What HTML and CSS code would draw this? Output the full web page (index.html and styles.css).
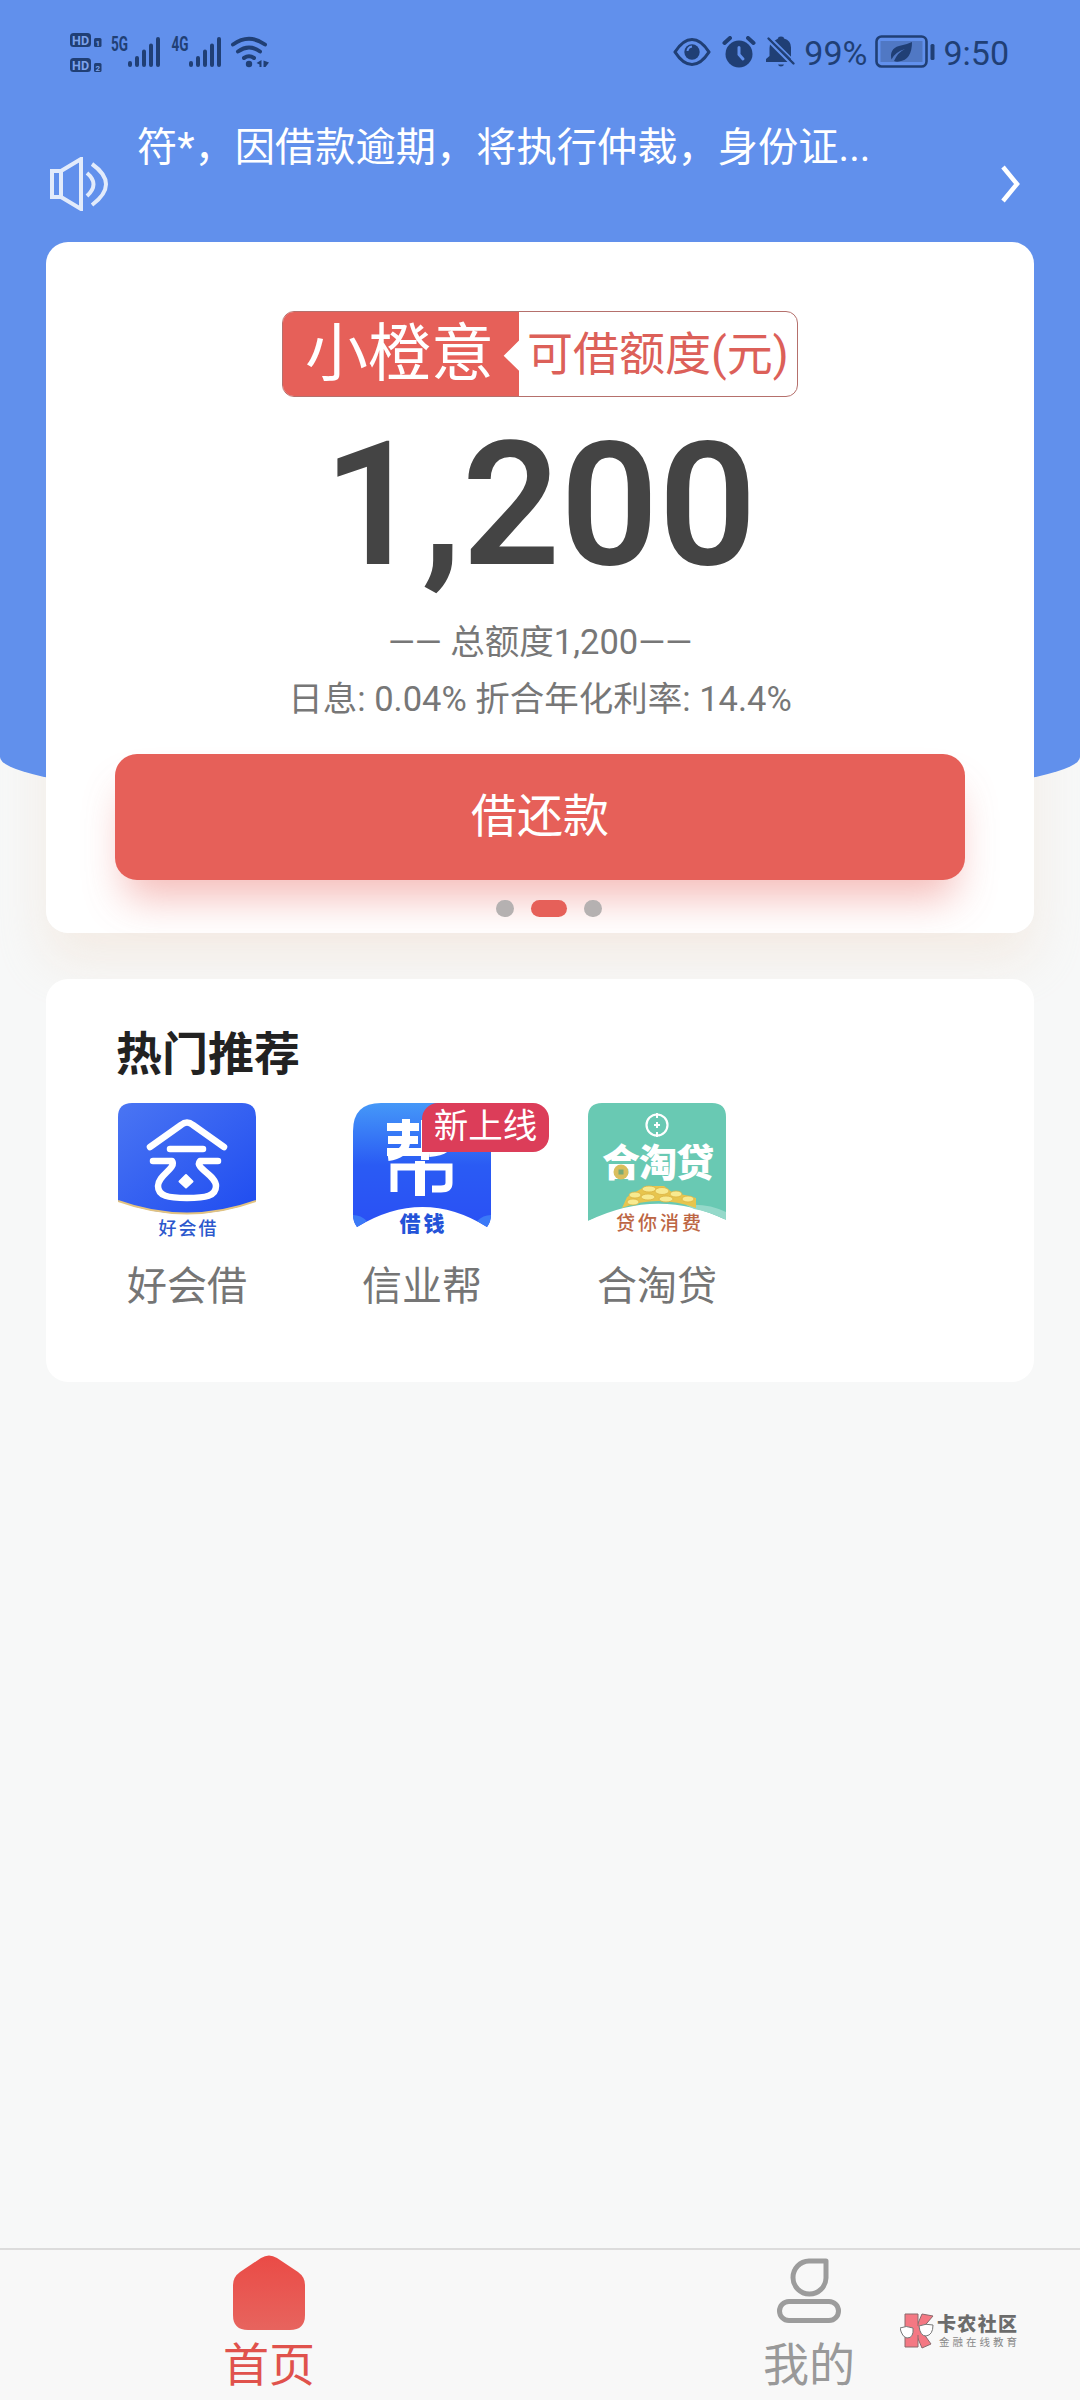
FILE: index.html
```html
<!DOCTYPE html>
<html lang="zh-CN">
<head>
<meta charset="utf-8">
<meta name="viewport" content="width=device-width">
<title>首页</title>
<link rel="stylesheet" href="styles.css">
</head>
<body>
<div class="screen">
  <header class="status">
    <svg class="status-left" width="230" height="50" viewBox="0 -3 230 50">
      <rect x="0" y="3" width="21" height="14" rx="3.5"/>
      <rect x="0" y="28" width="21" height="14" rx="3.5"/>
      <rect x="24" y="8" width="7.500" height="9" rx="1.500"/>
      <rect x="24" y="33" width="7.500" height="9" rx="1.500"/>
      <g class="knock"><text x="2" y="14.600" font-size="12.500" textLength="17">HD</text><text x="2" y="39.600" font-size="12.500" textLength="17">HD</text><text x="25.600" y="15.800" font-size="8">1</text><text x="25.600" y="40.800" font-size="8">2</text></g>
      <g class="net"><text x="41" y="20.500" font-size="20" textLength="17" lengthAdjust="spacingAndGlyphs">5G</text><text x="101.500" y="20.500" font-size="20" textLength="17" lengthAdjust="spacingAndGlyphs">4G</text></g>
      <g class="bars">
        <path d="M60 33v2M67 28v7M74 21.500v13.500M81 15.500v19.500M88 9v26"/>
        <path d="M121 33v2M128 28v7M135 21.500v13.500M142 15.500v19.500M149 9v26"/>
      </g>
      <g class="wifi"><path d="M163 14.500Q179 3 195 14.500M168 21.500Q179 13.500 190 21.500M174 28Q179 24.500 184 28"/></g>
      <circle cx="179" cy="34" r="3.200"/>
      <path d="M191.500 30v7h-2v-2.500l-3-1.500zM193.500 30.500l5.500 2-3.500 4.500h-2z"/>
    </svg>
    <div class="status-right">
      <svg width="38" height="30" viewBox="0 0 38 30"><path d="M2 15Q10 2.500 19 2.500T36 15Q28 27.500 19 27.500T2 15Z" fill="none" stroke="#203f75" stroke-width="3.200" stroke-linejoin="round"/><circle cx="19" cy="15" r="7.700"/><path d="M14.500 14q.5-4 4.500-4.500" fill="none" stroke="#6190ec" stroke-width="2"/></svg>
      <svg class="alarm" width="34" height="32" viewBox="0 0 34 32"><circle cx="17" cy="18" r="13.500"/><path d="M2.500 7l5.500-5M31.500 7l-5.500-5" stroke="#203f75" stroke-width="4" stroke-linecap="round"/><path d="M17 11.500v7l4 4.500" fill="none" stroke="#6190ec" stroke-width="3" stroke-linecap="round"/></svg>
      <svg class="bell" width="30" height="32" viewBox="0 0 30 32"><path d="M8 5q3-2 4-2.500 0-2 3-2t3 2q7 2 7 9v13zM4 8.500L21.500 26H0v-3l3.500-3v-8zM12 28.500h6q-.5 2-3 2t-3-2z"/><path d="M2.500 2.500l25 25" stroke="#203f75" stroke-width="2.400" stroke-linecap="round"/><path d="M6 2.800l22 22" stroke="#6190ec" stroke-width="1.600"/></svg>
      <span class="pct">99%</span>
      <svg class="battery" width="60" height="34" viewBox="0 0 60 34"><rect x="1.500" y="1.500" width="50" height="30" rx="5" fill="none" stroke="#203f75" stroke-width="2.600"/><rect x="5.500" y="6" width="42" height="21" fill="#5078c4"/><rect x="55.500" y="9" width="4" height="16" rx="1.500"/><path d="M37 7q0 18-13 19.500-3 .5-5-.5 4-9 11-12-10 3-13.500 10.500Q14 14 24 11q8-1.500 13-4z"/></svg>
      <span class="time">9:50</span>
    </div>
  </header>

  <div class="notice">
    <svg class="speaker" width="60" height="54" viewBox="0 0 60 54"><path d="M2 14h9v26H2zM11 14L31 2v50L11 40"/><path d="M37 16q13 11 0 23M42 7q28 20 0 41" /></svg>
    <p>符*，因借款逾期，将执行仲裁，身份证...</p>
    <svg class="more" width="22" height="40" viewBox="0 0 22 40"><path d="M2 3l14 17L2 37"/></svg>
  </div>

  <main>
    <section class="card loan">
      <div class="tag"><span class="brand">小橙意</span><span class="kind">可借额度(元)</span></div>
      <div class="amount">1,200</div>
      <p class="line total">—— 总额度1,200——</p>
      <p class="line">日息: 0.04% 折合年化利率: 14.4%</p>
      <button class="cta" type="button">借还款</button>
      <div class="dots"><i></i><i class="on"></i><i></i></div>
    </section>

    <section class="card hot">
      <h2>热门推荐</h2>
      <div class="apps">
        <div class="app">
          <svg width="138" height="138" viewBox="0 0 138 138">
            <defs><linearGradient id="g1" x1="0" y1="0" x2="1" y2="1"><stop offset="0" stop-color="#4a75f3"/><stop offset="1" stop-color="#1f4cf0"/></linearGradient></defs>
            <path d="M14 0H124Q138 0 138 14V98Q69 124 0 98V14Q0 0 14 0Z" fill="url(#g1)"/>
            <path d="M0 98Q69 123 138 98" fill="none" stroke="#e2c381" stroke-width="2"/>
            <g fill="none" stroke="#fff" stroke-width="6.500" stroke-linecap="round" stroke-linejoin="round"><path d="M32 44L63 22Q69 17 75 22L106 44M52 46H85"/><path d="M35 58H54C59 65 40 72 40 83C40 93 50 95 69 95S98 93 98 83C98 72 76 65 82 58H100"/></g>
            <path d="M68 72l6.500 6.500-6.500 6-6.500-6z" fill="#fff" stroke="#fff" stroke-width="2" stroke-linejoin="round"/>
            <text x="40.500" y="132" font-size="18" textLength="58" fill="#2c58cd" font-weight="500">好会借</text>
          </svg>
          <span>好会借</span>
        </div>
        <div class="app">
          <svg width="138" height="138" viewBox="0 0 138 138">
            <defs><linearGradient id="g2" x1="0" y1="0" x2="0" y2="1"><stop offset="0" stop-color="#4598f8"/><stop offset=".5" stop-color="#2a5bf4"/><stop offset="1" stop-color="#2a50f4"/></linearGradient></defs>
            <path d="M28 0H110Q138 0 138 28V112Q138 118 134 124Q70 84 4 124Q0 118 0 112V28Q0 0 28 0Z" fill="url(#g2)"/>
            <path d="M0 112q8 0 14 6l-10 6q-4-5-4-12zM138 112q-8 0-14 6l10 6q4-5 4-12z" fill="#3b79f7"/>
            <g fill="none" stroke="#fff" stroke-width="8"><path d="M34 24H66M35 37H65M34 49H68M53 16V40Q51 52 35 54M72 17V57M72 22H94Q86 29 94 36Q99 48 76 50"/><path stroke-width="7" d="M41 89V64H96V80Q96 86 88 86H79"/><path stroke-width="10" d="M67 58V93"/></g>
            <text x="46.500" y="128" font-size="21" textLength="45" fill="#2453d8" font-weight="900">借钱</text>
          </svg>
          <b class="badge">新上线</b>
          <span>信业帮</span>
        </div>
        <div class="app">
          <svg width="138" height="138" viewBox="0 0 138 138">
            <path d="M14 0H124Q138 0 138 14V117Q70 84 0 118V14Q0 0 14 0Z" fill="#69c9b3"/>
            <path d="M98 102q22-2 40 7v8q-18-9-32-11z" fill="#95d9ca"/>
            <circle cx="69" cy="22" r="10.500" fill="none" stroke="#fff" stroke-width="2.200"/><path d="M69 10v5M69 29v5M66 22h6M69 19v6" stroke="#fff" stroke-width="2"/>
            <text x="14" y="73" font-size="38" textLength="112" fill="#fff" font-weight="900">合淘贷</text>
            <circle cx="33" cy="69" r="7.500" fill="#d9be5d"/><rect x="30.500" y="66.500" width="5" height="5" fill="#79aa77"/>
            <path d="M34 105L39 94 51 87 59 83H76L85 90 97 92 108 95V105Q70 91 34 105Z" fill="#e7c54e"/>
            <g fill="#f8ea90" stroke="#dcb444" stroke-width=".8"><ellipse cx="47" cy="92" rx="6" ry="3"/><ellipse cx="61" cy="86" rx="7" ry="3"/><ellipse cx="74" cy="88" rx="7" ry="3.500"/><ellipse cx="88" cy="91" rx="6" ry="3"/><ellipse cx="100" cy="96" rx="6" ry="3"/><ellipse cx="60" cy="94" rx="7" ry="3"/><ellipse cx="78" cy="96" rx="7" ry="3"/><ellipse cx="45" cy="99" rx="6" ry="3"/></g>
            <path d="M0 118Q69 90 138 117V138H0Z" fill="#fff"/>
            <text x="28" y="127" font-size="19" textLength="85" fill="#bd6644" font-weight="500">贷你消费</text>
          </svg>
          <span>合淘贷</span>
        </div>
      </div>
    </section>
  </main>

  <nav class="tabs">
    <div class="tab active">
      <svg width="72" height="76" viewBox="0 0 72 76"><defs><linearGradient id="g3" x1="0" y1="0" x2="0" y2="1"><stop offset="0" stop-color="#ea4b46"/><stop offset="1" stop-color="#e7645e"/></linearGradient></defs><path d="M28 3Q36-2 44 3L65 17Q72 22 72 30V60Q72 75 57 75H15Q0 75 0 60V30Q0 22 7 17Z" fill="url(#g3)"/></svg>
      <span>首页</span>
    </div>
    <div class="tab">
      <svg width="72" height="76" viewBox="0 0 72 76"><path d="M53 6V23A16.500 16.500 0 1 1 36 6Z" fill="none" stroke="#9c9c9c" stroke-width="5" stroke-linejoin="round"/><rect x="6.500" y="46.500" width="59" height="19" rx="9.500" fill="none" stroke="#9c9c9c" stroke-width="5"/></svg>
      <span>我的</span>
    </div>
    <svg class="mark" width="120" height="38" viewBox="0 0 120 38">
      <g fill="#f47883" stroke="#8a6a6d" stroke-width="1"><path d="M22 2L33 4 21 18 31 32 22 36 16 22V16Z"/><path d="M5 2H18V35H5Z"/></g>
      <path d="M17 14h3v9h-3z" fill="#f47883"/>
      <g fill="#fff" stroke="#777" stroke-width="1"><path d="M0 16Q6 13 13 16 14 26 7 26 2 25 0 16ZM19 14Q26 11 33 13 33 23 26 24 20 24 19 14Z"/></g>
      <text x="37" y="19" font-size="19" textLength="80" fill="#6c6c6c" font-weight="900">卡农社区</text>
      <text x="39" y="33.500" font-size="10.500" textLength="78" fill="#888">金融在线教育</text>
    </svg>
  </nav>
</div>
</body>
</html>
```
FILE: styles.css
```css
* { box-sizing: border-box; margin: 0; }
body { font-family: Roboto, "Noto Sans CJK SC", sans-serif; background: #f7f8f8; }
.screen { position: relative; width: 1080px; height: 2400px; display: flex; flex-direction: column; overflow: hidden; isolation: isolate; }
.screen::before { content: ""; position: absolute; z-index: -1; left: 0; top: 0; width: 1080px; height: 807px; background: #6190ec; border-radius: 0 0 540px 540px / 0 0 50px 50px; }

.status { height: 104px; padding: 27px 71px 0 70px; display: flex; justify-content: space-between; color: #203f75; }
.status svg { display: block; fill: #203f75; flex: none; }
.knock text { fill: #7da3ec; font-weight: 700; }
.net text { font-weight: 700; }
.bars path, .wifi path { fill: none; stroke: #203f75; stroke-width: 4; stroke-linecap: round; }
.status-right { display: flex; height: 50px; align-items: center; }
.alarm { margin-left: 11px; }
.status-right .bell { margin-left: 10px; }
.pct, .time { font-size: 34px; line-height: 50px; padding-top: 2px; }
.pct { margin-left: 8px; }
.battery { margin-left: 8px; }
.time { margin-left: 8px; }

.notice { height: 138px; padding: 0 57px 0 50px; display: flex; color: #fff; }
.notice svg { flex: none; fill: none; stroke: #fff; }
.speaker { margin-top: 53px; stroke-width: 4; opacity: .82; }
.notice p { margin: 16px 0 0 27px; font-size: 40.250px; line-height: 56px; white-space: nowrap; flex: 1; }
.more { margin-top: 60px; stroke-width: 4.500; }

main { padding: 0 46px; flex: 1; }
.card { background: #fff; border-radius: 22px; }
.loan { position: relative; height: 691px; padding: 69px 69px 0; display: flex; flex-direction: column; align-items: center; }
.loan::before { content: ""; position: absolute; z-index: -2; inset: 0; border-radius: 22px; box-shadow: 0 28px 50px rgba(240, 222, 206, .45); }
.tag { width: 516px; height: 86px; display: flex; border: 1px solid #b5706c; border-radius: 12px; overflow: hidden; line-height: 84px; white-space: nowrap; }
.brand { width: 236px; padding-left: 22px; background: #e66059; color: #fff; font-size: 63px; clip-path: polygon(0 0, 100% 0, 100% 34%, 93.500% 52%, 100% 70%, 100% 100%, 0 100%); }
.kind { padding-left: 8px; color: #dc6059; font-size: 46px; }
.amount { margin-top: 2px; color: #444; font-size: 172px; line-height: 212px; font-weight: 600; }
.line { color: #777; font-size: 34.500px; line-height: 57px; white-space: nowrap; }
.total { margin-top: 3px; }
.cta { margin-top: 26px; width: 850px; height: 126px; border: 0; border-radius: 22px; background: #e66059; color: #fff; font: 46px/124px Roboto, "Noto Sans CJK SC", sans-serif; padding: 0 0 2px; flex: none; box-shadow: 0 28px 40px -10px rgba(230, 96, 89, .42); }
.dots { display: flex; gap: 17px; margin: 20px 0 0 18px; z-index: 1; }
.dots i { width: 18px; height: 17px; border-radius: 9px; background: #b5b1b1; }
.dots .on { width: 36px; background: #e66059; }

.hot { position: relative; margin-top: 46px; height: 403px; padding: 45px 72px 0; }
h2 { font-size: 46px; line-height: 60px; font-weight: 700; color: #222; margin-left: -2px; }
.apps { display: flex; gap: 97px; margin-top: 19px; }
.app { position: relative; width: 138px; display: flex; flex-direction: column; align-items: center; color: #757575; font-size: 40px; line-height: 58px; white-space: nowrap; }
.app svg { display: block; margin-bottom: 17px; flex: none; }
.badge { position: absolute; left: 69px; top: 0; width: 127px; height: 49px; border-radius: 16px 16px 16px 0; background: #dc3d59; color: #fff; font-size: 34.500px; line-height: 46px; text-align: center; font-weight: 400; }

.tabs { position: relative; height: 152px; border-top: 2px solid #dcdcdc; background: #f8f8f8; display: flex; }
.tab { flex: 1; display: flex; flex-direction: column; align-items: center; padding: 5px 2px 0 0; font-size: 46px; line-height: 68px; color: #999; }
.tab svg { display: block; flex: none; }
.tab.active { color: #e0524c; }
.mark { position: absolute; left: 900px; top: 62px; }
```
